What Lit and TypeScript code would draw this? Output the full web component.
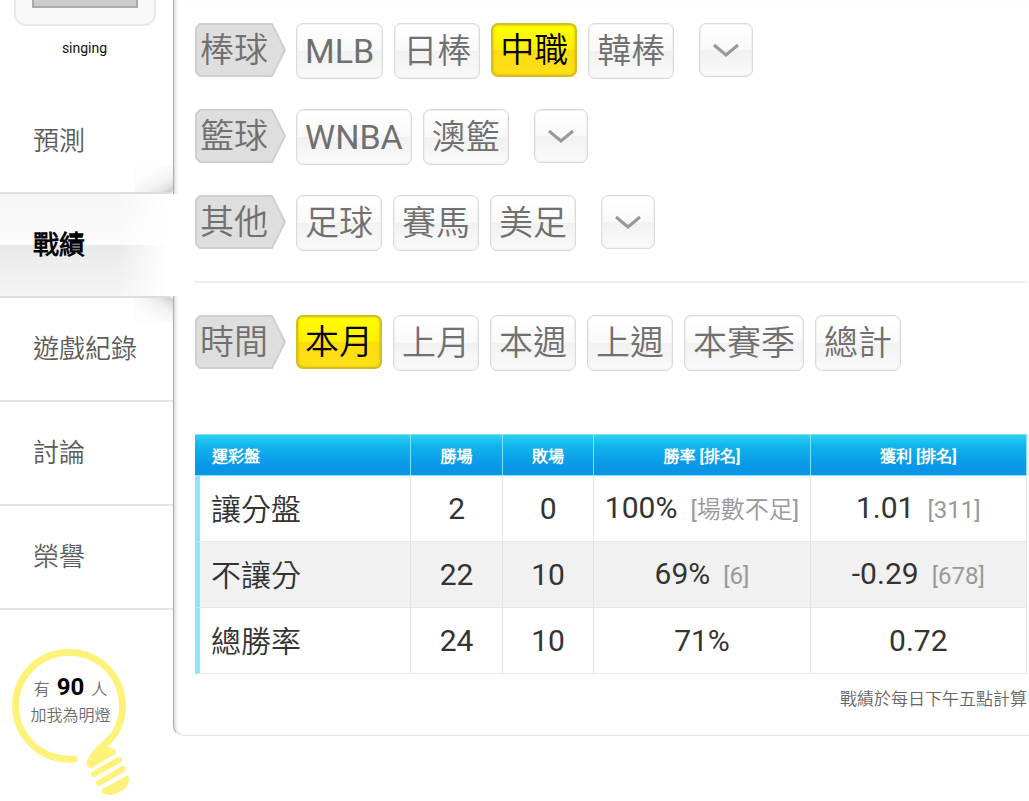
import { LitElement, html, css, nothing } from "lit";
import { customElement, property, state } from "lit/decorators.js";

interface FilterRow {
  label: string;
  options: string[];
  expandable: boolean;
}

const LEAGUES: FilterRow[] = [
  { label: "棒球", options: ["MLB", "日棒", "中職", "韓棒"], expandable: true },
  { label: "籃球", options: ["WNBA", "澳籃"], expandable: true },
  { label: "其他", options: ["足球", "賽馬", "美足"], expandable: true },
];

const PERIODS: FilterRow = {
  label: "時間",
  options: ["本月", "上月", "本週", "上週", "本賽季", "總計"],
  expandable: false,
};

const RECORDS = [
  { name: "讓分盤", win: "2", lose: "0", rate: "100%", rateRank: "[場數不足]", profit: "1.01", profitRank: "[311]" },
  { name: "不讓分", win: "22", lose: "10", rate: "69%", rateRank: "[6]", profit: "-0.29", profitRank: "[678]" },
  { name: "總勝率", win: "24", lose: "10", rate: "71%", rateRank: "", profit: "0.72", profitRank: "" },
];

@customElement("side-menu")
class SideMenu extends LitElement {
  @state() private current = "戰績";
  private items = ["預測", "戰績", "遊戲紀錄", "討論", "榮譽"];

  static styles = css`
    :host {
      display: block;
    }
    .profile {
      display: flex;
      flex-direction: column;
      align-items: center;
      height: 90px;
      padding-right: 4px;
      box-sizing: border-box;
    }
    .frame {
      box-sizing: border-box;
      width: 142px;
      height: 26px;
      padding: 0 16px;
      background: #f9f9f9;
      border: 2px solid #e9e9e9;
      border-top: 0;
      border-radius: 0 0 12px 12px;
    }
    .photo {
      box-sizing: border-box;
      height: 8px;
      background: #ccc;
      border: 2px solid #aaa;
      border-top: 0;
    }
    .name {
      margin-top: 13px;
      font-size: 14px;
      line-height: 18px;
      color: #111;
    }
    .item {
      box-sizing: border-box;
      display: flex;
      align-items: center;
      position: relative;
      height: 104px;
      padding-left: 33px;
      border-bottom: 2px solid #e4e4e4;
      font-size: 26px;
      line-height: 32px;
      color: #5c5c5c;
      text-decoration: none;
    }
    .current {
      height: 102px;
      margin-right: -8px;
      border-bottom: 0;
      color: #000;
      font-weight: 700;
      background: linear-gradient(90deg, transparent 65%, #fff 92%),
        linear-gradient(#f5f5f5, #fcfcfc 50%, #e9e9e9 50%, #f5f5f5);
    }
    .before {
      border-bottom-color: #ddd;
      border-bottom-right-radius: 4px;
    }
    .after {
      height: 106px;
      border-top: 2px solid #ddd;
      border-top-right-radius: 4px;
    }
    .before::after,
    .after::after {
      content: "";
      position: absolute;
      right: 0;
      width: 39px;
      height: 25px;
    }
    .before::after {
      bottom: 0;
      border-bottom-right-radius: 3px;
      background: linear-gradient(150deg, #fdfdfd 30%, #f3f3f3 65%, #e2e2e2 85%, #c4c4c4);
    }
    .after::after {
      top: 0;
      border-top-right-radius: 3px;
      background: linear-gradient(30deg, #fdfdfd 30%, #f3f3f3 65%, #e2e2e2 85%, #c4c4c4);
    }
    .beacon {
      position: relative;
      margin: 38px 0 0 11px;
      width: 120px;
      height: 148px;
    }
    .beacon svg {
      display: block;
    }
    .count {
      position: absolute;
      top: 26px;
      left: 0;
      width: 119px;
      text-align: center;
      font-size: 16px;
      line-height: 26px;
      color: #6c6c6c;
    }
    .count strong {
      margin: 0 3px;
      font-size: 24px;
      font-weight: 700;
      color: #000;
    }
  `;

  private side(i: number) {
    const at = this.items.indexOf(this.current);
    if (i === at) return "current";
    if (i === at - 1) return "before";
    if (i === at + 1) return "after";
    return "";
  }

  render() {
    return html`
      <div class="profile">
        <div class="frame"><div class="photo"></div></div>
        <div class="name">singing</div>
      </div>
      <nav>
        ${this.items.map(
          (t, i) => html`<a class="item ${this.side(i)}" href="#" @click=${(e: Event) => {
            e.preventDefault();
            this.current = t;
          }}>${t}</a>`
        )}
      </nav>
      <div class="beacon">
        <svg width="120" height="148" viewBox="11 648 120 148" fill="none" stroke="#fff27a" stroke-linecap="round" stroke-linejoin="round" aria-hidden="true">
          <path stroke-width="7" d="M74 759A53.500 53.500 0 1 1 115 733C108 744 93 751 90 763" />
          <path stroke-width="6" d="M91 765L113 752" />
          <path stroke="none" fill="#fff27a" d="M87 762L104 743L112 749L92 768Z" />
          <path stroke-width="6" d="M94 774L119 760M99 783L123 769" />
          <path stroke="none" fill="#fff27a" d="M101 790L126 776Q129 775 129 779C129 788 118 795 109 795Q103 794 101 791Z" />
        </svg>
        <div class="count">有 <strong>90</strong> 人<br />加我為明燈</div>
      </div>
    `;
  }
}

@customElement("filter-row")
class FilterRowElement extends LitElement {
  @property({ attribute: false }) row!: FilterRow;
  @property() selected = "";

  static styles = css`
    :host {
      display: flex;
      align-items: flex-start;
      gap: 11px;
      font-size: 34px;
      line-height: 48px;
      color: #707070;
    }
    .tag {
      position: relative;
      box-sizing: border-box;
      width: 90px;
      height: 54px;
      padding: 3px 5px;
    }
    .tag svg {
      position: absolute;
      inset: 0;
      z-index: -1;
    }
    button {
      box-sizing: border-box;
      height: 56px;
      margin: 0;
      padding: 0 8px;
      border: 1px solid #dadada;
      border-radius: 7px;
      background: linear-gradient(#fff, #f9f9f9 50%, #f1f1f1 50%, #fafafa);
      box-shadow: inset 0 0 1px 1px #f0f0f0;
      font: inherit;
      color: inherit;
      white-space: nowrap;
      cursor: pointer;
    }
    .on {
      height: 54px;
      border: 2px solid #d2bf20;
      padding: 0 7px;
      background: linear-gradient(#ffff00, #fff000 50%, #ffdc0c 50%, #ffe018);
      box-shadow: inset 0 0 3px #d8b800;
      color: #000;
    }
    .more {
      display: grid;
      place-items: center;
      width: 54px;
      height: 54px;
      margin-left: 14px;
      padding: 0;
    }
  `;

  private pick(option: string) {
    this.dispatchEvent(new CustomEvent("pick", { detail: option }));
  }

  render() {
    return html`
      <span class="tag">
        <svg width="91" height="54" viewBox="0 0 91 54" aria-hidden="true">
          <path d="M5 1H77L90 27L77 53H5L1 49V5Z" fill="#dedede" stroke="#d0d0d0" stroke-width="2" stroke-linejoin="round" />
        </svg>
        ${this.row.label}
      </span>
      ${this.row.options.map(
        (o) => html`<button type="button" class=${o === this.selected ? "on" : ""} @click=${() => this.pick(o)}>${o}</button>`
      )}
      ${this.row.expandable
        ? html`<button type="button" class="more" aria-label="更多">
            <svg width="26" height="14" viewBox="0 0 26 14" fill="none" stroke="#999" stroke-width="3">
              <path d="M1 2L13 12L25 2" />
            </svg>
          </button>`
        : nothing}
    `;
  }
}

@customElement("record-table")
class RecordTable extends LitElement {
  static styles = css`
    :host {
      display: block;
    }
    table {
      width: 100%;
      table-layout: fixed;
      border-collapse: separate;
      border-spacing: 0;
      color: #333;
    }
    .name,
    .wide {
      width: 26%;
    }
    .num {
      width: 11%;
    }
    th,
    td {
      box-sizing: border-box;
      padding: 0;
      text-align: center;
      white-space: nowrap;
    }
    thead th {
      height: 42px;
      padding-top: 3px;
      font-size: 16px;
      line-height: 20px;
      font-weight: 700;
      color: #fff;
      background: linear-gradient(#2ad0f0, #10b4ec 28%, #0a98e8 75%, #0a94e4);
      border: 1px solid #7ce6f8;
      border-left: 0;
    }
    tbody th,
    td {
      height: 66px;
      font-size: 30px;
      line-height: 40px;
      font-weight: 400;
      border-right: 1px solid #e4e4e4;
      border-bottom: 1px solid #e6e6e6;
    }
    tr th:first-child {
      text-align: left;
      padding-left: 17px;
    }
    tbody th:first-child {
      padding-top: 3px;
      padding-left: 11px;
      border-left: 5px solid #8ce6f8;
    }
    tbody tr:nth-child(even) {
      background: #f1f1f1;
    }
    .rank {
      margin-left: 13px;
      font-size: 24px;
      color: #999;
    }
  `;

  render() {
    const rank = (r: string) => (r ? html`<span class="rank">${r}</span>` : nothing);
    return html`
      <table>
        <thead>
          <tr>
            <th class="name" scope="col">運彩盤</th>
            <th class="num" scope="col">勝場</th>
            <th class="num" scope="col">敗場</th>
            <th class="wide" scope="col">勝率 [排名]</th>
            <th class="wide" scope="col">獲利 [排名]</th>
          </tr>
        </thead>
        <tbody>
          ${RECORDS.map(
            (r) => html`<tr>
              <th scope="row">${r.name}</th>
              <td>${r.win}</td>
              <td>${r.lose}</td>
              <td>${r.rate}${rank(r.rateRank)}</td>
              <td>${r.profit}${rank(r.profitRank)}</td>
            </tr>`
          )}
        </tbody>
      </table>
    `;
  }
}

@customElement("app-root")
class AppRoot extends LitElement {
  @state() private league = "中職";
  @state() private period = "本月";

  static styles = css`
    :host {
      display: grid;
      grid-template-columns: 173px minmax(0, 1fr);
      align-items: start;
      background: #fff;
      font-family: Roboto, "Noto Sans CJK TC DemiLight", "Noto Sans CJK TC", sans-serif;
    }
    side-menu {
      position: relative;
      z-index: 1;
    }
    main {
      position: relative;
      z-index: 0;
      padding: 23px 2px 23px 21px;
      border-left: 1px solid #aaa;
      border-bottom: 1px solid #e6e6e6;
      border-bottom-left-radius: 10px;
      box-shadow: inset 4px 0 4px -3px #ccc;
    }
    .leagues {
      display: grid;
      gap: 30px;
      padding-bottom: 30px;
      border-bottom: 2px solid #ececec;
    }
    .period {
      margin-top: 32px;
    }
    record-table {
      margin-top: 63px;
    }
    .note {
      margin: 13px 0 0;
      padding-bottom: 1px;
      text-align: right;
      font-size: 17px;
      line-height: 24px;
      color: #666;
    }
  `;

  render() {
    return html`
      <side-menu></side-menu>
      <main>
        <div class="leagues">
          ${LEAGUES.map(
            (row) => html`<filter-row .row=${row} selected=${this.league} @pick=${(e: CustomEvent) => (this.league = e.detail)}></filter-row>`
          )}
        </div>
        <filter-row class="period" .row=${PERIODS} selected=${this.period} @pick=${(e: CustomEvent) => (this.period = e.detail)}></filter-row>
        <record-table></record-table>
        <p class="note">戰績於每日下午五點計算</p>
      </main>
    `;
  }
}
